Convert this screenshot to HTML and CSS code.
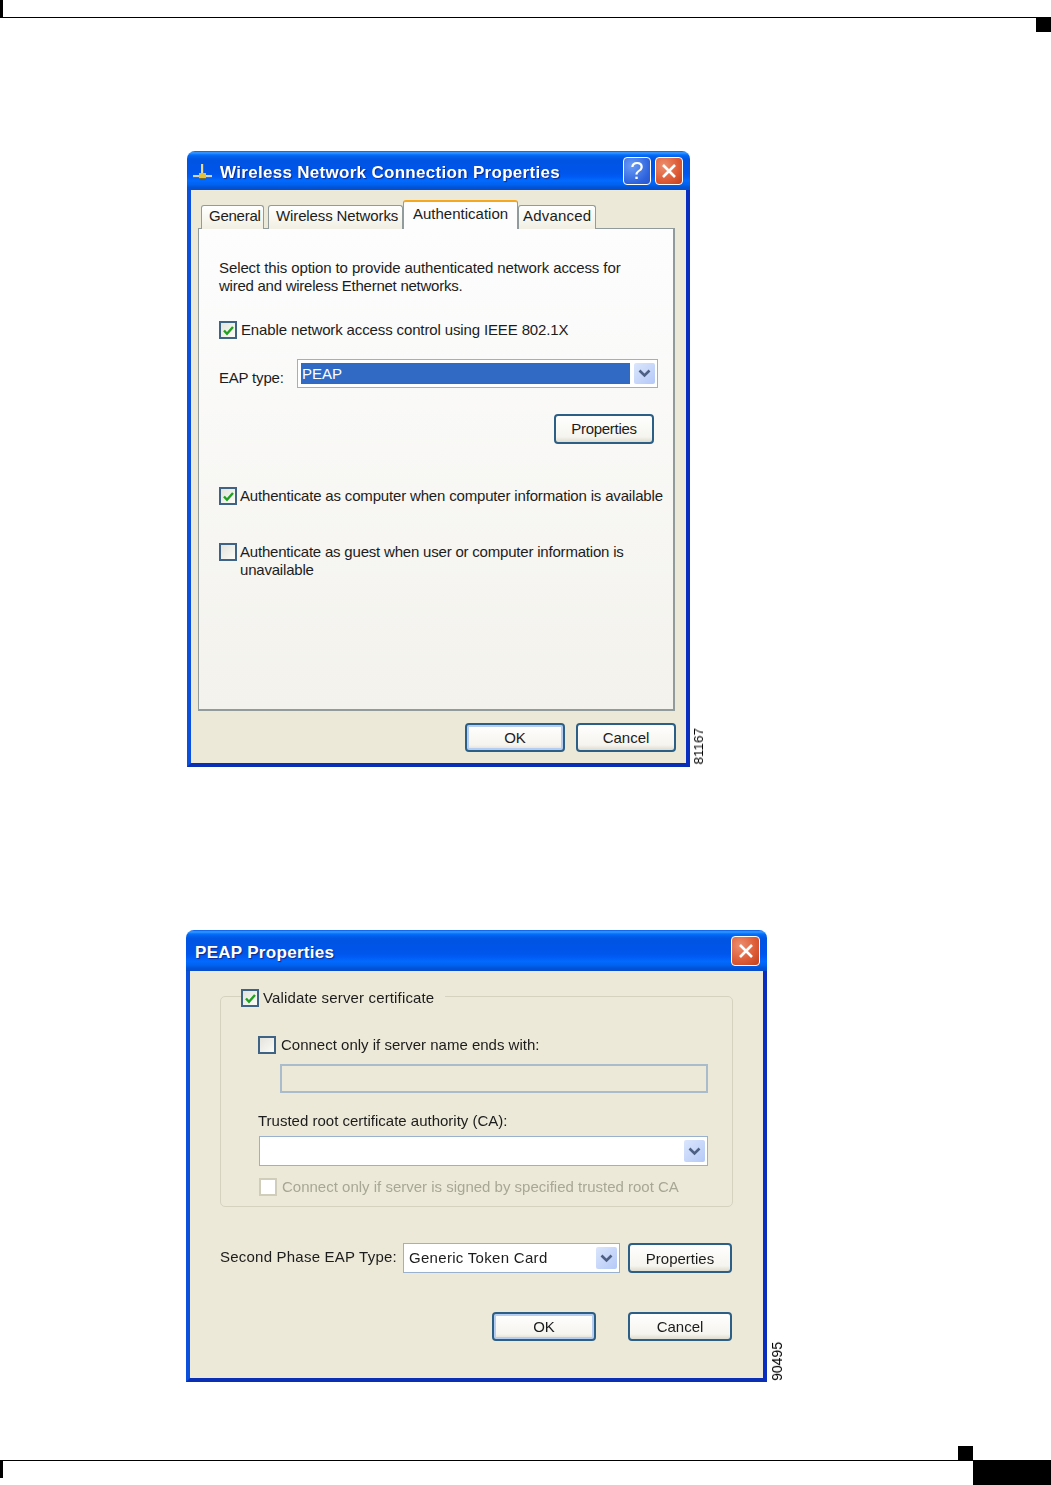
FILE: index.html
```html
<!DOCTYPE html>
<html lang="en">
<head>
  <meta charset="UTF-8" />
  <title>Wireless Network Connection Properties</title>
  <link rel="stylesheet" href="styles.css">
</head>
<body>

  <!-- Crop marks, top -->
  <header class="page-top">
    <div class="top-tick"></div>
    <div class="top-rule"></div>
    <div class="top-mark"></div>
  </header>

  <main class="page-main">

    <!-- Authentication tab -->
    <div class="figure figure-one">
      <section class="dialog dialog-wide">
        <div class="titlebar">
          <svg class="title-icon" viewBox="0 0 21 19" width="21" height="19">
            <rect x="9" y="1" width="3" height="11" fill="#e8d9a0"/>
            <rect x="11" y="1" width="1" height="11" fill="#6b6a50"/>
            <rect x="1" y="12" width="19" height="2" fill="#d8d3b8"/>
            <rect x="1" y="14" width="19" height="1" fill="#5c6478"/>
            <rect x="7" y="10" width="7" height="6" fill="#e2c23a"/>
            <rect x="7" y="15" width="7" height="1" fill="#7a6a1c"/>
          </svg>
          <span class="title-text">Wireless Network Connection Properties</span>
          <button class="title-btn title-help">?</button>
          <button class="title-btn title-close">
            <svg viewBox="0 0 16 16" width="16" height="16"><path d="M2 2 14 14M14 2 2 14" stroke="#fff" stroke-width="2.6"/></svg>
          </button>
        </div>
        <div class="client client-tabs">
          <div class="tabs">
            <div class="tab tab-general">General</div>
            <div class="tab tab-wireless">Wireless Networks</div>
            <div class="tab tab-auth">Authentication</div>
            <div class="tab tab-advanced">Advanced</div>
          </div>
          <div class="tab-pane">
            <p class="intro">Select this option to provide authenticated network access for<br><span class="intro-end">wired and wireless Ethernet networks.</span></p>

            <div class="check-row enable-row">
              <span class="checkbox">
                <svg viewBox="0 0 13 13" width="13" height="13"><path d="M2 6.5 5 9.8 11 3" fill="none" stroke="#21a121" stroke-width="2.4"/></svg>
              </span>
              <span class="check-label">Enable network access control using IEEE 802.1X</span>
            </div>

            <div class="eap-row">
              <span class="eap-label">EAP type:</span>
              <div class="combo combo-eap">
                <span class="combo-value combo-selected">PEAP</span>
                <span class="combo-arrow">
                  <svg viewBox="0 0 13 9" width="13" height="9"><path d="M1.5 1.5 6.5 6.5 11.5 1.5" fill="none" stroke="#4d6185" stroke-width="2.6"/></svg>
                </span>
              </div>
            </div>

            <div class="prop-row">
              <button class="btn btn-prop">Properties</button>
            </div>

            <div class="check-row computer-row">
              <span class="checkbox">
                <svg viewBox="0 0 13 13" width="13" height="13"><path d="M2 6.5 5 9.8 11 3" fill="none" stroke="#21a121" stroke-width="2.4"/></svg>
              </span>
              <span class="check-label">Authenticate as computer when computer information is available</span>
            </div>

            <div class="check-row guest-row">
              <span class="checkbox"></span>
              <span class="check-label">Authenticate as guest when user or computer information is<br>unavailable</span>
            </div>
          </div>
          <div class="dialog-actions actions-one">
            <button class="btn btn-default">OK</button>
            <button class="btn">Cancel</button>
          </div>
        </div>
      </section>
      <span class="figure-num num-one">81167</span>
    </div>

    <!-- PEAP dialog -->
    <div class="figure figure-two">
      <section class="dialog dialog-peap">
        <div class="titlebar titlebar-peap">
          <span class="title-text">PEAP Properties</span>
          <button class="title-btn title-close close-peap">
            <svg viewBox="0 0 16 16" width="16" height="16"><path d="M2 2 14 14M14 2 2 14" stroke="#fff" stroke-width="2.6"/></svg>
          </button>
        </div>
        <div class="client client-peap">
          <fieldset class="group">
            <legend class="group-legend">
              <span class="checkbox">
                <svg viewBox="0 0 13 13" width="13" height="13"><path d="M2 6.5 5 9.8 11 3" fill="none" stroke="#21a121" stroke-width="2.4"/></svg>
              </span>
              <span class="check-label">Validate server certificate</span>
            </legend>

            <div class="check-row server-row">
              <span class="checkbox"></span>
              <span class="check-label">Connect only if server name ends with:</span>
            </div>
            <div class="text-input"></div>
            <div class="field-label">Trusted root certificate authority (CA):</div>
            <div class="combo combo-ca">
              <span class="combo-value"></span>
              <span class="combo-arrow">
                <svg viewBox="0 0 13 9" width="13" height="9"><path d="M1.5 1.5 6.5 6.5 11.5 1.5" fill="none" stroke="#4d6185" stroke-width="2.6"/></svg>
              </span>
            </div>
            <div class="check-row signed-row">
              <span class="checkbox checkbox-off"></span>
              <span class="check-label label-off">Connect only if server is signed by specified trusted root CA</span>
            </div>
          </fieldset>

          <div class="phase-row">
            <span class="phase-label">Second Phase EAP Type:</span>
            <div class="combo combo-phase">
              <span class="combo-value">Generic Token Card</span>
              <span class="combo-arrow">
                <svg viewBox="0 0 13 9" width="13" height="9"><path d="M1.5 1.5 6.5 6.5 11.5 1.5" fill="none" stroke="#4d6185" stroke-width="2.6"/></svg>
              </span>
            </div>
            <button class="btn btn-peap btn-tall">Properties</button>
          </div>

          <div class="dialog-actions actions-two">
            <button class="btn btn-peap btn-default">OK</button>
            <button class="btn btn-peap">Cancel</button>
          </div>
        </div>
      </section>
      <span class="figure-num num-two">90495</span>
    </div>

  </main>

  <!-- Crop marks, bottom -->
  <footer class="page-bottom">
    <div class="bottom-mark"></div>
    <div class="bottom-row">
      <div class="bottom-rule">
        <div class="bottom-tick"></div>
      </div>
      <div class="bottom-block"></div>
    </div>
  </footer>

</body>
</html>
```

FILE: styles.css
```css
*, *::before, *::after {
  box-sizing: border-box;
}

html, body {
  margin: 0;
  padding: 0;
  height: 1485px;
  overflow: hidden;
  background: #fff;
}

body {
  display: flex;
  flex-direction: column;
  font-family: 'Liberation Sans', Arial, sans-serif;
  font-size: 15px;
  line-height: 18px;
  color: #1c1c1c;
}

/* crop marks */
.page-top {
  display: flex;
  flex-direction: column;
}

.top-tick {
  width: 3px;
  height: 17px;
  background: #000;
}

.top-rule {
  height: 1px;
  background: #000;
}

.top-mark {
  align-self: flex-end;
  width: 15px;
  height: 14px;
  background: #000;
}

.page-bottom {
  margin-top: auto;
  display: flex;
  flex-direction: column;
}

.bottom-mark {
  width: 15px;
  height: 14px;
  margin-left: 958px;
  background: #000;
}

.bottom-row {
  display: flex;
}

.bottom-rule {
  flex: 1;
  height: 25px;
  border-top: 1px solid #000;
}

.bottom-tick {
  width: 3px;
  height: 17px;
  background: #000;
}

.bottom-block {
  width: 78px;
  height: 25px;
  background: #000;
}

/* figures */
.page-main {
  padding-left: 187px;
}

.figure {
  display: flex;
  align-items: flex-end;
}

.figure-one {
  margin-top: 119px;
}

.figure-two {
  margin-top: 163px;
  margin-left: -1px;
}

.figure-num {
  writing-mode: vertical-rl;
  transform: rotate(180deg);
  line-height: 12px;
  color: #000;
  filter: blur(0.3px);
}

.num-one {
  margin-left: 3px;
  margin-bottom: 2px;
  font-size: 13.5px;
}

.num-two {
  margin-left: 4px;
  margin-bottom: 1px;
  font-size: 14px;
}

/* dialog window */
.dialog {
  display: flex;
  flex-direction: column;
  border-radius: 8px 8px 0 0;
  overflow: hidden;
  filter: blur(0.4px);
}

.dialog-wide {
  width: 503px;
}

.dialog-peap {
  width: 581px;
}

.titlebar {
  display: flex;
  align-items: center;
  height: 39px;
  padding: 0 7px 0 5px;
  background: linear-gradient(#0058ee 0%, #3593ff 4%, #288eff 6%, #127dff 8%, #036ffc 10%, #0262ee 14%, #0057e5 20%, #0054e3 24%, #0055eb 56%, #005bf5 66%, #026afe 76%, #0062ef 86%, #0052d6 94%, #0a4cc8 100%);
}

.titlebar-peap {
  height: 41px;
  padding: 0 7px 0 9px;
}

.title-icon {
  flex: none;
  margin-right: 7px;
  margin-top: 3px;
}

.title-text {
  flex: 1;
  padding-top: 5px;
  font-size: 17px;
  font-weight: 700;
  letter-spacing: 0.3px;
  color: #fff;
  text-shadow: 1px 1px 1px #0f2a8a;
  white-space: nowrap;
}

.title-btn {
  display: flex;
  align-items: center;
  justify-content: center;
  width: 28px;
  height: 28px;
  padding: 0;
  border: 1px solid #fff;
  border-radius: 4px;
  font-family: 'Liberation Sans', Arial, sans-serif;
  color: #fff;
}

.title-help {
  margin-right: 4px;
  font-size: 24px;
  background: radial-gradient(circle at 30% 30%, #6a9cf5, #2d62dd 70%, #2a55c8);
}

.title-close {
  background: radial-gradient(circle at 30% 30%, #ec8f6e, #dc5a35 60%, #c2401c);
}

.close-peap {
  width: 29px;
  height: 30px;
}

.client {
  background: #ece9d8;
  border-style: solid;
  border-width: 0 4px 4px 4px;
  border-color: #0a50dc #0a2fc0 #0a2fb5 #0a50dc;
}

.client-tabs {
  padding: 10px 11px 11px 7px;
}

/* tabs */
.tabs {
  display: flex;
  align-items: flex-end;
  height: 29px;
  margin-bottom: -1px;
  padding-left: 3px;
}

.tab {
  position: relative;
  display: flex;
  align-items: center;
  justify-content: flex-start;
  height: 24px;
  padding-bottom: 3px;
  border: 1px solid #919b9c;
  border-bottom: none;
  border-radius: 3px 3px 0 0;
  background: linear-gradient(#fff, #f1efe3);
  white-space: nowrap;
}

.tab-general {
  width: 63px;
  margin-right: 4px;
  padding-left: 7px;
  letter-spacing: -0.25px;
}

.tab-wireless {
  width: 135px;
  padding-left: 7px;
  letter-spacing: -0.12px;
}

.tab-auth {
  z-index: 1;
  width: 115px;
  height: 29px;
  padding-left: 9px;
  padding-bottom: 4px;
  border-top: 2px solid #f5a81e;
  background: #fdfdfd;
}

.tab-advanced {
  width: 78px;
  padding-left: 4px;
  letter-spacing: 0.2px;
}

.tab-pane {
  height: 483px;
  padding: 30px 0 0 20px;
  border: solid #919b9c;
  border-width: 1px 2px 2px 1px;
  background: linear-gradient(#fdfdfe, #f3f2ec);
}

.intro {
  margin: 0;
  letter-spacing: -0.1px;
  white-space: nowrap;
}

.intro-end {
  letter-spacing: -0.25px;
}

/* checkboxes */
.check-row {
  display: flex;
  align-items: flex-start;
}

.checkbox {
  flex: none;
  display: inline-flex;
  align-items: center;
  justify-content: center;
  width: 18px;
  height: 18px;
  margin-right: 4px;
  border: 2px solid #3e6384;
  background: linear-gradient(135deg, #e4e3dc, #fbfbf8);
}

.checkbox-off {
  border-color: #d0cdbb;
  background: #fff;
}

.check-label {
  white-space: nowrap;
}

.label-off {
  color: #a8a695;
}

.enable-row {
  margin-top: 26px;
  letter-spacing: -0.13px;
}

.computer-row {
  margin-top: 43px;
  letter-spacing: -0.17px;
}

.guest-row {
  margin-top: 38px;
  letter-spacing: -0.2px;
}

.computer-row .checkbox, .guest-row .checkbox {
  margin-right: 3px;
}

/* combos and inputs */
.eap-row {
  display: flex;
  margin-top: 20px;
}

.eap-label {
  width: 78px;
  padding-top: 10px;
  letter-spacing: -0.2px;
}

.combo {
  display: flex;
  align-items: stretch;
  gap: 4px;
  height: 29px;
  padding: 3px 2px 3px 3px;
  border: 1px solid #98b1cf;
  background: #fff;
}

.combo-value {
  flex: 1;
  padding-left: 1px;
  line-height: 21px;
  white-space: nowrap;
}

.combo-selected {
  background: #316ac5;
  color: #fff;
}

.combo-arrow {
  flex: none;
  display: flex;
  align-items: center;
  justify-content: center;
  width: 21px;
  border-radius: 2px;
  background: linear-gradient(135deg, #dbe6fd, #b5c9f7);
}

.combo-eap {
  width: 361px;
}

.combo-ca {
  width: 449px;
  height: 30px;
  margin: 6px 0 0 1px;
}

.combo-phase {
  width: 217px;
  height: 30px;
  margin-right: 8px;
}

.text-input {
  width: 428px;
  height: 29px;
  margin: 10px 0 0 22px;
  border: 2px solid #aabbcc;
}

.field-label {
  margin-top: 19px;
}

/* buttons */
.btn {
  display: block;
  width: 100px;
  height: 29px;
  padding: 0;
  border: 2px solid #2c5f86;
  border-radius: 4px;
  background: linear-gradient(#fff, #f5f4ee 80%, #dfdccf);
  font-family: 'Liberation Sans', Arial, sans-serif;
  font-size: 15px;
  color: #1c1c1c;
}

.btn-default {
  box-shadow: inset 0 0 0 2px #b5cdf0;
}

.btn-prop {
  height: 30px;
  padding-bottom: 2px;
  letter-spacing: -0.3px;
}

.btn-peap {
  width: 104px;
}

.btn-tall {
  height: 30px;
}

.prop-row {
  display: flex;
  justify-content: flex-end;
  margin-top: 26px;
  padding-right: 19px;
}

.dialog-actions {
  display: flex;
  justify-content: flex-end;
}

.actions-one {
  gap: 11px;
  margin-top: 12px;
  margin-right: -1px;
}

.actions-two {
  gap: 32px;
  margin-top: 39px;
  padding-right: 31px;
}

/* PEAP group */
.client-peap {
  padding-top: 18px;
  padding-bottom: 37px;
}

.group {
  min-width: 0;
  width: 513px;
  margin: 0 0 0 30px;
  padding: 0 0 10px 37px;
  border: 1px solid #d5d2c0;
  border-radius: 5px;
}

.group-legend {
  display: flex;
  align-items: flex-start;
  height: 15px;
  margin-left: -17px;
  padding: 0 11px 0 0;
  letter-spacing: 0.15px;
}

.server-row {
  margin-top: 32px;
}

.server-row .checkbox {
  margin-right: 5px;
}

.signed-row {
  margin-top: 12px;
  margin-left: 1px;
}

.signed-row .checkbox {
  margin-right: 5px;
}

.phase-row {
  display: flex;
  align-items: center;
  margin: 36px 0 0 30px;
  letter-spacing: 0.22px;
}

.phase-label {
  width: 183px;
  padding-bottom: 2px;
  white-space: nowrap;
}

.combo-phase .combo-value {
  padding-left: 2px;
  letter-spacing: 0.3px;
}
```
